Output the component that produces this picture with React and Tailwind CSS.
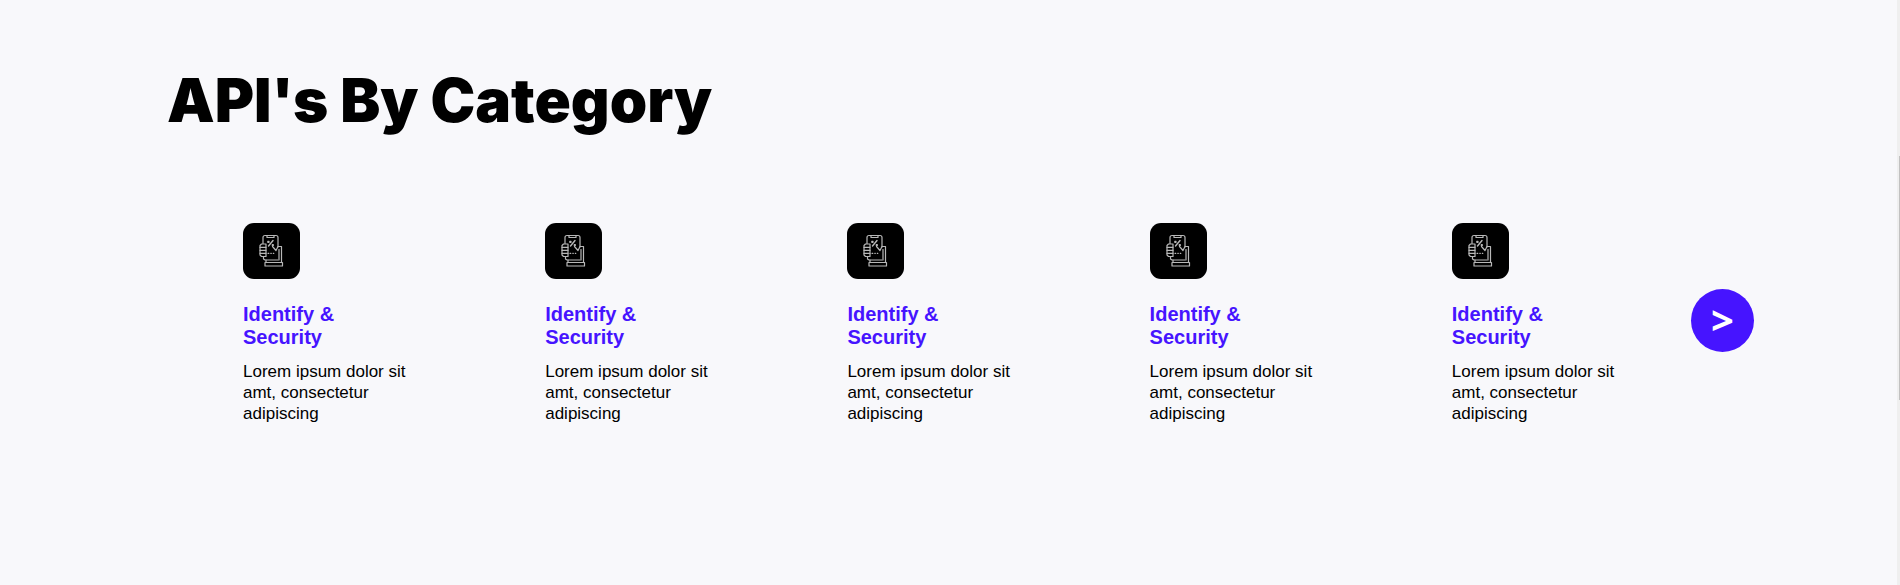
const categories = [1, 2, 3, 4, 5].map((id) => ({
  id,
  title: 'Identify & Security',
  text: 'Lorem ipsum dolor sit amt, consectetur adipiscing',
}));

function HandPhoneIcon() {
  return (
    <svg viewBox="0 0 57 56" className="h-14 w-[57px]" aria-hidden="true">
      <rect width="57" height="56" rx="11" fill="#000" />
      <g fill="none" stroke="#b8b8b8" strokeWidth="1.2" strokeLinejoin="round" strokeLinecap="round">
        <path d="M20 20.500V14.500q0-2 2-2h11q2 0 2 2V24" />
        <path d="M24 13v1.500h7V13" />
        <path d="M18.500 21H23v12.500h-4.500l-1.500-1.500v-9.500z" />
        <path d="M17 24.300h6M17 27.300h6M17 30.300h6" />
        <path d="M20.500 33.500V36l1.500 1h13" />
        <path d="M29.500 23.500l3.500 4 2-4h3.500V39" />
        <path d="M36 26.500V37" />
        <path d="M23 37v2.500M22 39.500h17.500V43H22z" />
        <path d="M30 17.500l-4.500 5.500" strokeWidth="1.400" />
        <path d="M24.800 18.300h1.200v1h-1.200zM29.300 21.500h1v1h-1z" />
        <path d="M25 30.300h.8M27.800 30.300h.5M30.300 30.300h.5" />
      </g>
    </svg>
  );
}

function CategoryCard({ title, text }) {
  return (
    <li className="min-w-0 flex-1">
      <HandPhoneIcon />
      <h2 className="mt-6 w-[120px] text-[20px] leading-[23px] font-bold text-[#4614ff]">{title}</h2>
      <p className="mt-3 w-[180px] text-[17px] leading-[21px] text-black">{text}</p>
    </li>
  );
}

export default function App() {
  return (
    <div className="flex min-h-screen bg-[#f8f8fb] font-['Liberation_Sans',Arial,sans-serif]">
      <main className="min-w-0 flex-1 pt-16 pl-[167px] pr-[143px]">
        <h1 className="font-['Inter',sans-serif] text-[60px] leading-[72px] font-black text-black">
          API&apos;s By Category
        </h1>
        <div className="mt-[87px] flex items-start">
          <ul className="flex min-w-0 flex-1 pl-[76px]">
            {categories.map((c) => (
              <CategoryCard key={c.id} title={c.title} text={c.text} />
            ))}
          </ul>
          <button
            type="button"
            aria-label="Next categories"
            className="-ml-[63px] mt-[66px] flex size-[63px] shrink-0 items-center justify-center rounded-full bg-[#4614ff] pb-[2px] font-['Open_Sans',sans-serif] text-[40px] leading-none font-bold text-white"
          >
            &gt;
          </button>
        </div>
      </main>
      <div className="w-[3px] bg-[#efefef] pt-[156px] pl-[2px]">
        <div className="h-[244px] bg-[#c1c1c1]" />
      </div>
    </div>
  );
}
